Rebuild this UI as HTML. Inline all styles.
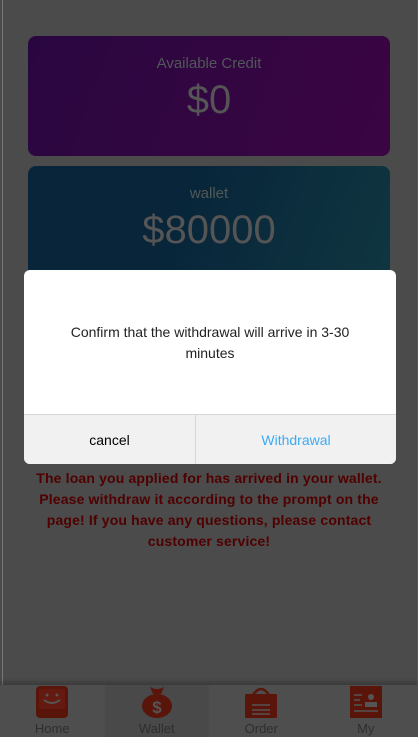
<!DOCTYPE html>
<html><head><style>
*{margin:0;padding:0;box-sizing:border-box}
body{width:418px;height:737px;overflow:hidden;background:#4b4b4b;font-family:"Liberation Sans",sans-serif;position:relative}
.lb{position:absolute;left:2px;top:0;width:1px;height:737px;background:#777}
.rb{position:absolute;right:0;top:0;width:1px;height:737px;background:#555}
.card{position:absolute;left:28px;width:362px;border-radius:8px;text-align:center;color:#505858}
.c1{top:36px;height:120px;background:linear-gradient(110deg,#2a0640,#3a0542)}
.c2{top:166px;height:120px;background:linear-gradient(110deg,#08253a 40%,#0f3640)}
.t{font-size:15px;padding-top:19px}
.v{font-size:40px;margin-top:6px;color:#555}
.modal{position:absolute;left:24px;top:270px;width:372px;height:194px;background:#fff;border-radius:6px;overflow:hidden}
.msg{position:absolute;top:52px;left:30px;right:30px;text-align:center;font-size:14px;line-height:21px;color:#222}
.btns{position:absolute;left:0;right:0;bottom:0;height:50px;border-top:1px solid #d6d6d6;background:#f1f1f1;display:flex}
.btns div{text-align:center;line-height:50px;font-size:14px}
.btns .b1{width:171px}
.btns .b2{flex:1;color:#3daaf5;border-left:1px solid #d6d6d6}
.red{position:absolute;top:468px;left:28px;width:362px;text-align:center;font-weight:bold;font-size:14px;line-height:21px;color:#500000;letter-spacing:0.15px}
.tab{position:absolute;left:0;right:0;top:685px;height:52px;background:#4e4e4e;display:flex;box-shadow:0 -3px 5px rgba(0,0,0,.25)}
.tab div{flex:1;text-align:center;font-size:13px;color:#2e2e2e;position:relative}
.tab .act{background:#494949}
.tab svg{display:block;margin:0 auto}
.tab span{position:absolute;bottom:1px;left:0;right:0}
</style></head><body>
<div class="lb"></div><div class="rb"></div>
<div class="card c1"><div class="t">Available Credit</div><div class="v">$0</div></div>
<div class="card c2"><div class="t">wallet</div><div class="v">$80000</div></div>
<div class="red">The loan you applied for has arrived in your wallet.<br>Please withdraw it according to the prompt on the<br>page! If you have any questions, please contact<br>customer service!</div>
<div class="modal"><div class="msg">Confirm that the withdrawal will arrive in 3-30 minutes</div>
<div class="btns"><div class="b1">cancel</div><div class="b2">Withdrawal</div></div></div>
<div class="tab">
<div><svg width="34" height="34" viewBox="0 0 34 34"><rect x="1" y="1" width="32" height="32" rx="4" fill="#5a150b"/><rect x="4" y="4" width="26" height="20" rx="2" fill="#641a10"/><circle cx="12" cy="10" r="1.5" fill="#555"/><circle cx="22" cy="10" r="1.5" fill="#555"/><path d="M9 15 q8 6 16 0" stroke="#555" stroke-width="2" fill="none"/></svg><span>Home</span></div>
<div class="act"><svg width="34" height="34" viewBox="0 0 34 34"><path d="M10 2 q7 4 14 0 l-3 7 h-8z" fill="#5a150b"/><ellipse cx="17" cy="21" rx="15" ry="12" fill="#5a150b"/><text x="17" y="28" font-size="17" font-weight="bold" text-anchor="middle" fill="#555" font-family="Liberation Sans">$</text></svg><span>Wallet</span></div>
<div><svg width="34" height="34" viewBox="0 0 34 34"><path d="M9 10 q8 -12 16 0" stroke="#5a150b" stroke-width="2.5" fill="none"/><rect x="1" y="9" width="32" height="24" rx="1" fill="#5a150b"/><path d="M8 20h18M8 25h18M8 29h18" stroke="#555" stroke-width="1.5"/></svg><span>Order</span></div>
<div><svg width="34" height="34" viewBox="0 0 34 34"><rect x="1" y="1" width="32" height="32" fill="#5a150b"/><path d="M5 10h8M5 15h6M5 20h8M5 26h24" stroke="#555" stroke-width="1.5"/><circle cx="22" cy="12" r="3" fill="#555"/><rect x="16" y="17" width="12" height="5" fill="#555"/></svg><span>My</span></div>
</div>
</body></html>
